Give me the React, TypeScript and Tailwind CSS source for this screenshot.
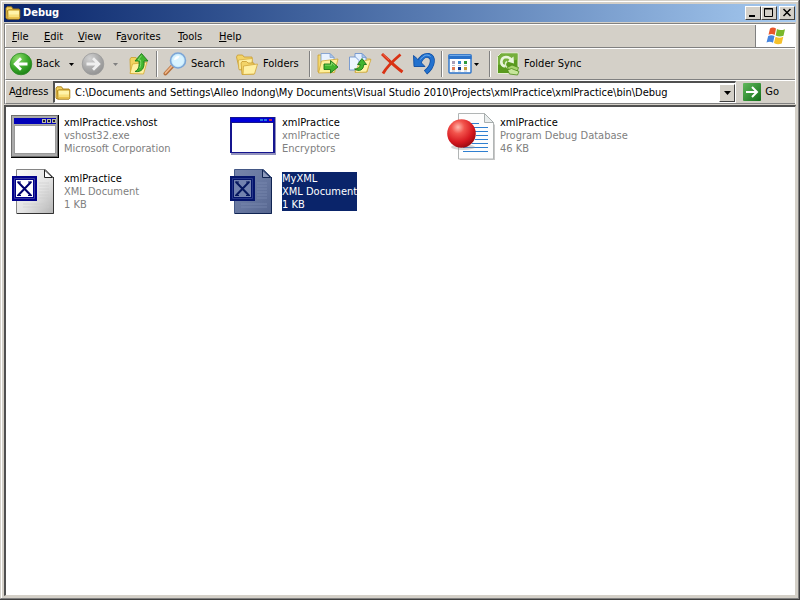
import type { ReactNode } from 'react';

function FolderSmall({ className = '' }: { className?: string }) {
  return (
    <svg viewBox="0 0 16 16" className={`h-4 w-4 shrink-0 ${className}`} aria-hidden="true">
      <path d="M1 3 2 1.800h4.500L8 4h6v10H2l-1-1z" fill="#f3d25f" stroke="#a87d14" strokeWidth=".9" />
      <path d="M2.500 5.500 4 4.800h10.800v8.400L14 14H3z" fill="#f8e07c" stroke="#a87d14" strokeWidth=".9" />
      <path d="M4 6h10v3.500H4z" fill="#fff3a9" />
      <path d="M3.500 12h10.800v1.500H3.500z" fill="#eac04c" />
    </svg>
  );
}

function ArrowDisc({ forward = false }: { forward?: boolean }) {
  const id = forward ? 'disc-grey' : 'disc-green';
  return (
    <svg viewBox="0 0 24 24" className="h-6 w-6 shrink-0" aria-hidden="true">
      <defs>
        <radialGradient id={id} cx=".35" cy=".25" r=".85">
          <stop offset="0" stopColor={forward ? '#d2d2d2' : '#8edb6b'} />
          <stop offset=".55" stopColor={forward ? '#a9a9a9' : '#3aa829'} />
          <stop offset="1" stopColor={forward ? '#8e8e8e' : '#167a12'} />
        </radialGradient>
      </defs>
      <circle cx="12" cy="12" r="10.8" fill={`url(#${id})`} stroke={forward ? '#9a9a9a' : '#2d8a26'} strokeWidth=".8" />
      <path
        d={forward ? 'M5.5 12h12M12 6.2l5.800 5.800-5.800 5.800' : 'M18.500 12h-12M12 6.200 6.200 12l5.800 5.800'}
        fill="none"
        stroke={forward ? '#efefef' : '#fff'}
        strokeWidth="2.800"
      />
    </svg>
  );
}

function UpFolderIcon() {
  return (
    <svg viewBox="0 0 24 24" className="h-6 w-6 shrink-0" aria-hidden="true">
      <path d="m3 7 1-1.500h5l1.500 2 6 .5v12l-13 1.500z" fill="#f2d35f" stroke="#c9a02d" strokeWidth=".8" />
      <path d="m5.500 12 14.500-2-3.500 12L3 21.500z" fill="#fff0a0" stroke="#d3aa35" strokeWidth=".8" />
      <path d="M8 19.500c3.500-1.500 4.500-5 4-10.500H8L14.500 1.500 21 9h-4c.8 7-2 11.500-9 10.500z" fill="#3fb52f" stroke="#1c7a17" strokeWidth=".9" />
      <path d="M14.500 3.500 11 8h2.500c.5 3 .3 6-.8 8" fill="none" stroke="#8ade72" strokeWidth=".9" />
    </svg>
  );
}

function SearchIcon() {
  return (
    <svg viewBox="0 0 24 24" className="h-6 w-6 shrink-0" aria-hidden="true">
      <path d="m2.500 21.500 7-7.500" stroke="#b5713f" strokeWidth="4" strokeLinecap="round" />
      <path d="m2.500 21 6.500-7" stroke="#f0b78a" strokeWidth="1.800" strokeLinecap="round" />
      <circle cx="15" cy="8.500" r="7.500" fill="#c4e9fb" stroke="#7ba5d6" strokeWidth="1.600" />
      <circle cx="15" cy="8.500" r="5.800" fill="#d8f3ff" />
      <path d="M11 8c.5-3 3-4.500 5.500-3.800-1 2.500-3 3.800-5.500 3.800z" fill="#fff" />
    </svg>
  );
}

function FoldersIcon() {
  return (
    <svg viewBox="0 0 24 24" className="h-6 w-6 shrink-0" aria-hidden="true">
      <path d="m1.500 5 1-2h5l1.500 2h8l.5 11-13 2z" fill="#f3d468" stroke="#c79b2e" strokeWidth=".8" />
      <path d="m3.500 8 14-1.500-1.500 10-12 1z" fill="#fff0a3" stroke="#d0a63a" strokeWidth=".7" />
      <path d="m6 11 1-1.500h4.500l1.500 1.500h6v11L7 22.500z" fill="#f3d468" stroke="#c79b2e" strokeWidth=".8" />
      <path d="m8.500 14 14-2-3 10L8 22.500z" fill="#fff0a3" stroke="#d0a63a" strokeWidth=".8" />
    </svg>
  );
}

function MoveToIcon() {
  return (
    <svg viewBox="0 0 24 24" className="h-6 w-6 shrink-0" aria-hidden="true">
      <path d="M2 3h5l1 2h9v15H2z" fill="#f5d970" stroke="#c9a02d" strokeWidth=".8" />
      <path d="M5 1.500h9l4 4V17H5z" fill="#e8f2ff" stroke="#7e9fd0" strokeWidth=".9" />
      <path d="M14 1.500v4h4z" fill="#a9c5ec" stroke="#7e9fd0" strokeWidth=".7" />
      <path d="m2.500 21 3-12 16.500-2-3.500 13.500z" fill="#fff09a" stroke="#cda534" strokeWidth=".8" />
      <path d="M8 12h6.500V8.500l7.500 6.500-7.500 6V17.500H8z" fill="#41b52e" stroke="#1c7517" strokeWidth=".9" />
      <path d="M9 13.200h6.500v-2.500l3.500 3" fill="none" stroke="#93dd72" strokeWidth=".8" />
    </svg>
  );
}

function CopyToIcon() {
  return (
    <svg viewBox="0 0 24 24" className="h-6 w-6 shrink-0" aria-hidden="true">
      <path d="m9 9 2-2h11.500l-3.500 13H7z" fill="#fff09a" stroke="#cda534" strokeWidth=".8" />
      <path d="M7 1.500h7l4 4V14H7z" fill="#e4f0ff" stroke="#6f94cd" strokeWidth=".9" />
      <path d="M14 1.500v4h4z" fill="#a9c5ec" stroke="#6f94cd" strokeWidth=".7" />
      <path d="M1.500 5h6L11 8.500V18H1.500z" fill="#eef6ff" stroke="#6f94cd" strokeWidth=".9" />
      <path d="m7 20.500 5-11 11-2-4.500 12.500z" fill="#fff3a8" stroke="#cda534" strokeWidth=".7" />
      <path d="M6.500 17c3.500 0 5.500-1.500 5.700-4.500H9.500l4.500-6 4.500 6h-2.700c-.3 5.500-4.300 7.500-9.300 4.500z" fill="#41b52e" stroke="#1c7517" strokeWidth=".9" />
    </svg>
  );
}

function DeleteIcon() {
  return (
    <svg viewBox="0 0 24 24" className="h-6 w-6 shrink-0" aria-hidden="true">
      <path d="M2 2C9 8.500 15 14.500 22.500 20" fill="none" stroke="#d93214" strokeWidth="3" />
      <path d="M20.500 2.500C14 8 7 14.500 3 21.500" fill="none" stroke="#d93214" strokeWidth="2.800" />
      <path d="M2.500 2 9 8" stroke="#f0674b" />
    </svg>
  );
}

function UndoIcon() {
  return (
    <svg viewBox="0 0 24 24" className="h-6 w-6 shrink-0" aria-hidden="true">
      <path d="M7 10.500C9 5.500 13 2.800 16.500 3.500c5.500 1.500 5.500 10-3 17" fill="none" stroke="#0e4c9f" strokeWidth="5" />
      <path d="M1.500 3.500 2 14.500h11L9.500 11 5.500 7z" fill="#2271ce" stroke="#0e4c9f" strokeWidth=".9" />
      <path d="M7 10.500C9 5.500 13 2.800 16.500 3.500c5.500 1.500 5.500 10-2.600 16.600" fill="none" stroke="#2271ce" strokeWidth="3.600" />
      <path d="M8.500 7.500c2.500-4 7-6 10-3" fill="none" stroke="#71b1ef" />
    </svg>
  );
}

function ViewsIcon() {
  return (
    <svg viewBox="0 0 24 24" className="h-6 w-6 shrink-0" aria-hidden="true">
      <rect x="1" y="3" width="22" height="18" rx="1" fill="#fff" stroke="#2a72c9" strokeWidth="1.400" />
      <path d="M.5 2.500h23V7H.5z" fill="#2a72c9" />
      <path d="M1.500 3.500h21" stroke="#70a9e8" />
      <path d="M4 9h3v3H4z" fill="#a9a0b8" />
      <path d="M10 9h3v3h-3z" fill="#3988cf" />
      <path d="M16 9h3v3h-3z" fill="#2f9a3c" />
      <path d="M4 15h3v3H4z" fill="#e07a53" />
      <path d="M10 15h3v3h-3z" fill="#10358c" />
      <path d="M16 15h3v3h-3z" fill="#c79b38" />
      <path d="M4 13.500h3M10 13.500h3M16 13.500h3M4 19h3M10 19h3M16 19h3" stroke="#b9c2cf" />
    </svg>
  );
}

function SyncIcon() {
  return (
    <svg viewBox="0 0 24 24" className="h-6 w-6 shrink-0" aria-hidden="true">
      <path d="M5 1h17v20.500H1.500V4.500z" fill="#5a9a1f" stroke="#e4efd3" />
      <path d="M5 1.500h16.500v6L2 13V5z" fill="#82b84a" opacity=".7" />
      <path d="M9 14.500C3.500 13 4.500 5.500 10 5c2.500 0 4 1 5 2.500" fill="none" stroke="#e9f5dc" strokeWidth="2.600" />
      <path d="m17.500 4.500.5 7-6.500-2z" fill="#e9f5dc" />
      <path d="M11 9.500a3.500 3.500 0 1 0 5 4.500" fill="none" stroke="#dcefc6" strokeWidth="1.600" />
      <path d="M11 15.500 16 13l6.500 2.500-1 3.500-8-1z" fill="#a8d46f" stroke="#4d8a18" strokeWidth=".8" />
      <path d="m11.500 18 4-1.500 7.500 3-1.500 3.500-8-1z" fill="#c7e69b" stroke="#4d8a18" strokeWidth=".8" />
    </svg>
  );
}

function WindowsFlag() {
  return (
    <svg viewBox="0 0 22 20" className="h-5 w-6" aria-hidden="true">
      <path d="M5 2.500c2-1.500 4-1.300 6 0L9.700 9c-2-1.200-4-1.200-6.200-.2z" fill="#e8572b" />
      <path d="M12 3c2 1.200 4.500 1.500 8 .2L18.500 9.700c-2.700 1.200-5.500 1-7.800-.3z" fill="#79b82c" />
      <path d="M3.200 10c2.200-1.200 4.300-1 6.300.1L8 16.800c-2-1.300-4.200-1.400-6.500-.4z" fill="#4685e0" />
      <path d="M10.500 10.700c2.500 1.200 5 1.400 7.800.1l-1.600 6.600c-2.700 1.200-5.300 1-7.700-.4z" fill="#f6c12b" />
    </svg>
  );
}

function ProgramIcon() {
  return (
    <svg viewBox="0 0 48 48" className="h-12 w-12 shrink-0" aria-hidden="true">
      <path d="M0 2h48v43H0z" fill="#000" />
      <path d="M0 2h47v42H0z" fill="#6e6e6e" />
      <path d="M1 3h45v40H1z" fill="#aaa" />
      <path d="M3 5h42v6H3z" fill="#0000b8" />
      <path d="M31 6h4v4h-4zM36 6h4v4h-4zM41 6h4v4h-4z" fill="#b9b9a8" />
      <path d="M32 7h2v2h-2zM37 7h2v2h-2zM42 7h2v2h-2z" fill="#222" />
      <path d="M3 12h42v29H3z" fill="#999" />
      <path d="M4 13h40v27H4z" fill="#fff" />
    </svg>
  );
}

function AppWindowIcon() {
  return (
    <svg viewBox="0 0 48 48" className="h-12 w-12 shrink-0" aria-hidden="true">
      <path d="M2 4h45v38H2z" fill="#9292bd" />
      <path d="M1 4h45v36H1z" fill="#15158f" />
      <path d="M2 5h43v4H2z" fill="#0000d8" />
      <path d="M3 10h41v29H3z" fill="#fff" />
      <path d="M31 6h3v2h-3zM35 6h3v2h-3z" fill="#2678dc" />
      <path d="M40 6h3v2h-3z" fill="#b32a55" />
    </svg>
  );
}

function XmlIcon({ selected = false }: { selected?: boolean }) {
  const id = selected ? 'page-selected' : 'page-plain';
  return (
    <svg viewBox="0 1 48 48" className="h-12 w-12 shrink-0" aria-hidden="true">
      <defs>
        <linearGradient id={id} x1="0" y1="0" x2="1" y2="1">
          <stop offset="0" stopColor={selected ? '#7684ab' : '#f8f8f8'} />
          <stop offset=".55" stopColor={selected ? '#66769f' : '#e4e4e4'} />
          <stop offset="1" stopColor={selected ? '#56668f' : '#b4b4b4'} />
        </linearGradient>
      </defs>
      <path d="M5.500 1.500h29l8 8v36h-37z" fill={`url(#${id})`} stroke={selected ? '#435785' : '#858585'} />
      <path d="M42.500 9v36.500H6" fill="none" stroke={selected ? '#102452' : '#333'} />
      <path d="M33.500 2v7.500h8z" fill={selected ? '#8e9bbd' : '#fff'} stroke={selected ? '#102452' : '#222'} />
      <path d="M28 15h10M28 18h10M28 21h10M28 24h10M28 27h10M28 30h10M12 36h26M12 39h26" stroke={selected ? '#8291b7' : '#ccc'} opacity=".6" />
      <path d="M1 8h25v25H1z" fill={selected ? '#04146b' : '#00008b'} />
      <path d="M5 12h17v17H5z" fill={selected ? '#7382ae' : '#fff'} />
      <path d="M3.500 10.500h20v20h-20z" fill="none" stroke={selected ? '#28388a' : '#3a3a9f'} />
      <path d="m7 14 13 13.500M20 14 7 27.500" stroke={selected ? '#06175f' : '#00006e'} strokeWidth="2" />
      <path d="M6 14h4m7 0h4M6 27.500h4m7 0h4" stroke={selected ? '#06175f' : '#00006e'} />
    </svg>
  );
}

function DatabaseIcon() {
  return (
    <svg viewBox="0 0 48 48" className="h-12 w-12 shrink-0" aria-hidden="true">
      <defs>
        <radialGradient id="red-ball" cx=".38" cy=".28" r=".75">
          <stop offset="0" stopColor="#ffb9ad" />
          <stop offset=".3" stopColor="#f2544c" />
          <stop offset=".7" stopColor="#d71920" />
          <stop offset="1" stopColor="#980910" />
        </radialGradient>
      </defs>
      <path d="M13 3h26l9 9v35H13z" fill="#c8c8c8" />
      <path d="M11.500.500h26l9 9V46h-35z" fill="#fdfdfd" stroke="#b1b5b5" />
      <path d="M37.500.500v9h9z" fill="#e9eded" stroke="#a7adad" />
      <path d="M20 10.500h12M27 14.500h14M28 18.500h13M29 22.500h12M28 26.500h13M25 30.500h16M16 34.500h25M16 38.500h25" stroke="#2f7fd0" />
      <ellipse cx="16" cy="34" rx="12" ry="3" fill="#999" opacity=".4" />
      <circle cx="14.500" cy="20.500" r="14.300" fill="url(#red-ball)" />
    </svg>
  );
}

function GoIcon() {
  return (
    <svg viewBox="0 0 18 18" className="h-[18px] w-[18px] shrink-0" aria-hidden="true">
      <defs>
        <linearGradient id="go-green" x1="0" y1="0" x2="1" y2="1">
          <stop offset="0" stopColor="#62b85c" />
          <stop offset="1" stopColor="#117018" />
        </linearGradient>
      </defs>
      <rect width="18" height="18" rx="1" fill="url(#go-green)" />
      <path d="M3 9h11M9 4l5 5-5 5" fill="none" stroke="#fff" strokeWidth="2" />
    </svg>
  );
}

function Caret({ muted = false }: { muted?: boolean }) {
  return (
    <svg viewBox="0 0 5 3" className="h-[3px] w-[5px] shrink-0" aria-hidden="true">
      <path d="M0 0h5L2.500 3z" fill={muted ? '#808080' : '#000'} />
    </svg>
  );
}

function Separator() {
  return <span className="mx-[5px] h-[26px] w-0.5 shrink-0 border-r border-l border-r-white border-l-[#808080]" />;
}

function Key({ children }: { children: ReactNode }) {
  return <span className="underline underline-offset-1">{children}</span>;
}

function CaptionButton({ label, children }: { label: string; children: ReactNode }) {
  return (
    <button
      aria-label={label}
      className="h-3.5 w-4 border border-t-white border-r-[#404040] border-b-[#404040] border-l-white bg-[#d4d0c8]"
    >
      <svg viewBox="0 0 14 12" className="h-3 w-3.5" fill="none" stroke="#000" aria-hidden="true">
        {children}
      </svg>
    </button>
  );
}

type FileItem = { icon: ReactNode; name: string; type: string; detail: string; selected?: boolean };

const files: FileItem[] = [
  { icon: <ProgramIcon />, name: 'xmlPractice.vshost', type: 'vshost32.exe', detail: 'Microsoft Corporation' },
  { icon: <AppWindowIcon />, name: 'xmlPractice', type: 'xmlPractice', detail: 'Encryptors' },
  { icon: <DatabaseIcon />, name: 'xmlPractice', type: 'Program Debug Database', detail: '46 KB' },
  { icon: <XmlIcon />, name: 'xmlPractice', type: 'XML Document', detail: '1 KB' },
  { icon: <XmlIcon selected />, name: 'MyXML', type: 'XML Document', detail: '1 KB', selected: true },
];

function FileTile({ icon, name, type, detail, selected }: FileItem) {
  return (
    <li className="flex h-14 items-start gap-[5px] whitespace-nowrap">
      {icon}
      <div className={`mt-[3px] leading-[13px] ${selected ? 'bg-[#0a246a] text-white' : 'text-[#808080]'}`}>
        <p className={selected ? 'text-white' : 'text-black'}>{name}</p>
        <p>{type}</p>
        <p>{detail}</p>
      </div>
    </li>
  );
}

const band = 'flex items-center border-t border-b border-l border-t-white border-b-[#808080] border-l-white';

export default function App() {
  return (
    <div className="flex min-h-screen flex-col border-r border-b border-[#404040] bg-[#d4d0c8] font-['DejaVu_Sans_Condensed','DejaVu_Sans',sans-serif] text-[11px] text-black">
      <div className="flex grow flex-col border-t border-r border-b border-l border-t-[#d4d0c8] border-r-[#808080] border-b-[#808080] border-l-[#d4d0c8]">
        <div className="flex grow flex-col border-t border-l border-white px-0.5 pt-0.5 pb-0.5">
          <header className="flex h-[18px] items-center bg-linear-to-r from-[#0a246a] to-[#a6caf0] px-px">
            <FolderSmall />
            <h1 className="ml-0.5 grow font-bold text-white">Debug</h1>
            <div className="flex">
              <CaptionButton label="Minimize"><path d="M3 9h6" strokeWidth="2" /></CaptionButton>
              <CaptionButton label="Maximize"><path d="M2.500 1.500h8v8h-8zM2 2h9" /></CaptionButton>
            </div>
            <div className="ml-0.5 flex">
              <CaptionButton label="Close"><path d="m3.500 2 7 7m0-7-7 7" strokeWidth="1.500" /></CaptionButton>
            </div>
          </header>

          <div className="mt-px border-t border-r border-l border-t-[#808080] border-r-white border-l-[#808080]">
            <div className="flex h-6 border-t border-b border-t-white border-b-[#808080]">
              <nav className="flex grow items-center border-l border-white pt-0.5">
                <button className="w-8 pl-1.5 text-left"><Key>F</Key>ile</button>
                <button className="w-[34px] pl-1.5 text-left"><Key>E</Key>dit</button>
                <button className="w-[38px] pl-1.5 text-left"><Key>V</Key>iew</button>
                <button className="w-[62px] pl-1.5 text-left">F<Key>a</Key>vorites</button>
                <button className="w-[41px] pl-1.5 text-left"><Key>T</Key>ools</button>
                <button className="w-[38px] pl-1.5 text-left"><Key>H</Key>elp</button>
              </nav>
              <div className="flex w-10 items-center justify-center border-l border-[#808080] bg-white">
                <WindowsFlag />
              </div>
            </div>

            <div className={`${band} h-8 pl-[3px]`} role="toolbar" aria-label="Standard buttons">
              <button className="flex w-[72px] items-center gap-[3px]"><ArrowDisc />Back<span className="ml-1.5"><Caret /></span></button>
              <button className="flex w-[46px] items-center gap-2" aria-label="Forward"><ArrowDisc forward /><Caret muted /></button>
              <button aria-label="Up"><UpFolderIcon /></button>
              <Separator />
              <button className="flex w-[72px] items-center gap-1"><SearchIcon />Search</button>
              <button className="flex w-[69px] items-center gap-1"><FoldersIcon />Folders</button>
              <Separator />
              <div className="flex gap-2">
                <button aria-label="Move to"><MoveToIcon /></button>
                <button aria-label="Copy to"><CopyToIcon /></button>
                <button aria-label="Delete"><DeleteIcon /></button>
                <button aria-label="Undo"><UndoIcon /></button>
              </div>
              <Separator />
              <button className="flex w-9 items-center gap-0.5" aria-label="Views"><ViewsIcon /><Caret /></button>
              <Separator />
              <button className="flex items-center gap-1 whitespace-nowrap"><SyncIcon />Folder Sync</button>
            </div>

            <div className={`${band} h-6 pr-4 pl-[3px]`}>
              <label htmlFor="address" className="w-11 shrink-0">A<Key>d</Key>dress</label>
              <div className="flex h-[22px] min-w-0 grow items-center border-t-2 border-r border-b border-l-2 border-t-[#505050] border-r-white border-b-white border-l-[#505050] bg-white">
                <FolderSmall />
                <input
                  id="address"
                  className="ml-1 min-w-0 grow bg-white pt-0.5 outline-none"
                  defaultValue="C:\Documents and Settings\Alleo Indong\My Documents\Visual Studio 2010\Projects\xmlPractice\xmlPractice\bin\Debug"
                />
                <button
                  aria-label="Show addresses"
                  className="flex h-[18px] w-4 items-center justify-center border border-t-white border-r-[#404040] border-b-[#404040] border-l-white bg-[#d4d0c8]"
                >
                  <svg viewBox="0 0 7 4" className="h-1 w-[7px]" aria-hidden="true"><path d="M0 0h7L3.500 4z" /></svg>
                </button>
              </div>
              <button className="ml-[7px] flex items-center gap-1"><GoIcon />Go</button>
            </div>
          </div>

          <main className="mt-px flex grow border-t-2 border-r border-b border-l-2 border-t-[#505050] border-r-[#d4d0c8] border-b-[#d4d0c8] border-l-[#505050] bg-white pt-1.5 pl-[5px]">
            <ul className="grid h-fit grid-cols-[repeat(3,218px)]">
              {files.map((file) => (
                <FileTile key={`${file.name}-${file.type}`} {...file} />
              ))}
            </ul>
          </main>
        </div>
      </div>
    </div>
  );
}
